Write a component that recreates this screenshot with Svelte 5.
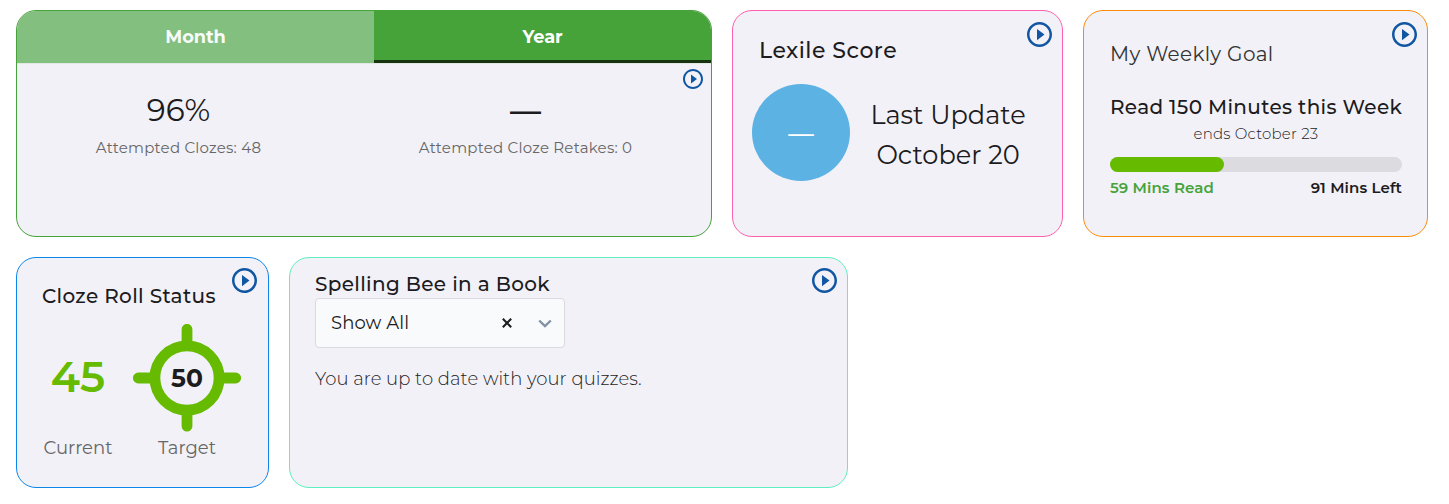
<script lang="ts">
	let activeTab = $state('Year');
	let selected = $state('Show All');

	const tabs = ['Month', 'Year'];
	const minutesRead = 59;
	const minutesGoal = 150;
	const progress = Math.floor((minutesRead / minutesGoal) * 100);
</script>

{#snippet play(small = false)}
	<button class="play" class:small aria-label="Play">
		<svg viewBox="2 2 20 20">
			<path
				d="M10 16.5l6-4.5-6-4.5v9zM12 2C6.48 2 2 6.48 2 12s4.48 10 10 10 10-4.48 10-10S17.52 2 12 2zm0 18c-4.41 0-8-3.59-8-8s3.59-8 8-8 8 3.59 8 8-3.59 8-8 8z"
			/>
		</svg>
	</button>
{/snippet}

<main class="dashboard">
	<div class="row">
		<section class="card clozes">
			<div class="tabs">
				{#each tabs as tab}
					<button class="tab" class:active={tab === activeTab} onclick={() => (activeTab = tab)}>
						{tab}
					</button>
				{/each}
			</div>
			<div class="stats">
				{@render play(true)}
				<div class="stat">
					<div class="value">96<span>%</span></div>
					<div class="label">Attempted Clozes: 48</div>
				</div>
				<div class="stat">
					<div class="value empty">—</div>
					<div class="label">Attempted Cloze Retakes: 0</div>
				</div>
			</div>
		</section>

		<section class="card lexile">
			{@render play()}
			<h2>Lexile Score</h2>
			<div class="lexile-body">
				<div class="score">—</div>
				<div class="update">
					<div>Last Update</div>
					<div>October 20</div>
				</div>
			</div>
		</section>

		<section class="card goal">
			{@render play()}
			<h2>My Weekly Goal</h2>
			<h3>Read {minutesGoal} Minutes this Week</h3>
			<div class="ends">ends October 23</div>
			<div class="bar"><div class="fill" style="width: {progress}%"></div></div>
			<div class="minutes">
				<span class="read">{minutesRead} Mins Read</span>
				<span class="left">{minutesGoal - minutesRead} Mins Left</span>
			</div>
		</section>
	</div>

	<div class="row second">
		<section class="card roll">
			{@render play()}
			<h2>Cloze Roll Status</h2>
			<div class="roll-grid">
				<div class="current">45</div>
				<div class="target">
					<svg viewBox="0 0 108 108">
						<circle cx="54" cy="54" r="32.1" />
						<path d="M54 5.3V19M54 89v13.2M5.3 54H19M89 54h13.7" />
					</svg>
					<span>50</span>
				</div>
				<div class="caption">Current</div>
				<div class="caption">Target</div>
			</div>
		</section>

		<section class="card spelling">
			{@render play()}
			<h2>Spelling Bee in a Book</h2>
			<div class="select">
				<span class="selected">{selected}</span>
				<svg class="clear" viewBox="0 0 10 10"><path d="M.8.8l8.4 8.4M9.2.8L.8 9.2" /></svg>
				<svg class="chevron" viewBox="0 0 14 9"><path d="M1.2 1.5L7 7l5.8-5.5" /></svg>
			</div>
			<p>You are up to date with your quizzes.</p>
		</section>
	</div>
</main>

<style>
	:global(body) {
		margin: 0;
		background: #fff;
	}

	.dashboard {
		display: flex;
		flex-direction: column;
		gap: 20px;
		padding: 10px 16px;
		font-family: Montserrat, Inter, sans-serif;
		color: #1c1b1d;
		white-space: nowrap;
	}

	.row {
		display: flex;
		gap: 20px;
		height: 227px;
	}
	.row.second {
		height: 231px;
	}

	.card {
		position: relative;
		box-sizing: border-box;
		border: 1px solid;
		border-radius: 20px;
		background: #f2f1f7;
	}

	button {
		border: none;
		padding: 0;
		font: inherit;
		background: none;
		cursor: pointer;
	}

	h2,
	h3,
	p {
		margin: 0;
		font-size: 20px;
		line-height: 30px;
		font-weight: 500;
		letter-spacing: 0.33px;
	}

	.play {
		position: absolute;
		top: 11px;
		right: 10px;
		width: 25px;
		height: 25px;
	}
	.play.small {
		top: 5px;
		right: 8px;
		width: 20px;
		height: 20px;
	}
	.second .play {
		top: 10px;
	}
	.roll .play {
		right: 11px;
	}
	.play svg {
		display: block;
		fill: #1156a3;
	}

	.clozes {
		width: 696px;
		border-color: #45a33a;
		overflow: hidden;
	}
	.tabs {
		display: flex;
		height: 52px;
		border-bottom: 1px solid #e2e8e4;
	}
	.tab {
		box-sizing: border-box;
		width: 357px;
		padding-bottom: 2px;
		background: #83bf7e;
		color: #f8fbf8;
		font-size: 17.8px;
		font-weight: 700;
		letter-spacing: -0.1px;
	}
	.tab.active {
		width: 337px;
		background: #45a33a;
		color: #fff;
		border-bottom: 3px solid #17330f;
		padding: 1px 0 0;
	}
	.stats {
		position: relative;
		display: flex;
		padding-top: 26px;
		text-align: center;
	}
	.stat {
		width: 323px;
	}
	.stat + .stat {
		width: 371px;
	}
	.value {
		font-size: 31px;
		line-height: 40px;
		font-weight: 450;
	}
	.value span {
		font-weight: 400;
	}
	.value.empty {
		font-weight: 600;
	}
	.label {
		margin-top: 8px;
		font-size: 15px;
		line-height: 20px;
		letter-spacing: 0.22px;
		color: #666;
	}

	.lexile {
		width: 331px;
		padding: 25px 19px 0;
		border-color: #ff5fae;
	}
	.lexile h2 {
		padding-left: 7px;
		font-size: 22px;
		letter-spacing: 0.5px;
	}
	.lexile-body {
		display: flex;
		gap: 20px;
		margin-top: 18px;
	}
	.score {
		width: 98px;
		height: 97px;
		border-radius: 50%;
		background: #5bb2e3;
		color: #fff;
		font-size: 25.6px;
		line-height: 97px;
		font-weight: 500;
		text-align: center;
	}
	.update {
		width: 156px;
		margin-top: 11px;
		font-size: 25.6px;
		line-height: 40px;
		text-align: center;
	}

	.goal {
		width: 345px;
		padding: 28px 25px 0 26px;
		border-color: #fb8c0a;
	}
	.goal h2 {
		font-weight: 400;
		color: #333;
	}
	.goal h3 {
		margin-top: 23px;
	}
	.ends {
		margin-top: 2px;
		font-size: 15px;
		line-height: 20px;
		letter-spacing: 0.2px;
		font-weight: 300;
		text-align: center;
	}
	.bar {
		height: 15px;
		margin-top: 13px;
		border-radius: 8px;
		background: #dcdbe0;
	}
	.fill {
		height: 100%;
		border-radius: 8px;
		background: #66bb00;
	}
	.minutes {
		display: flex;
		justify-content: space-between;
		margin-top: 6px;
		font-size: 15px;
		line-height: 20px;
		letter-spacing: 0.1px;
		font-weight: 600;
	}
	.read {
		color: #45a33a;
	}

	.roll {
		width: 253px;
		padding: 23px 0 0 25px;
		border-color: #0d86ea;
	}
	.roll-grid {
		display: grid;
		grid-template-columns: 72px 108px;
		column-gap: 19px;
		row-gap: 4px;
		margin-top: 13px;
		align-items: center;
		text-align: center;
	}
	.current {
		padding-bottom: 2px;
		font-size: 43px;
		line-height: 50px;
		font-weight: 600;
		color: #66bb00;
	}
	.target {
		display: grid;
		place-items: center;
		height: 108px;
	}
	.target > * {
		grid-area: 1 / 1;
	}
	.target svg {
		width: 108px;
		height: 108px;
		fill: none;
		stroke: #66bb00;
		stroke-width: 10.8;
		stroke-linecap: round;
	}
	.target span {
		font-size: 25px;
		font-weight: 700;
	}
	.caption {
		font-size: 18px;
		line-height: 24px;
		color: #666;
	}

	.spelling {
		width: 559px;
		padding: 13px 25px 0;
		border-color: #5eeebf;
	}
	.spelling h2 {
		line-height: 26px;
	}
	.select {
		display: flex;
		align-items: center;
		box-sizing: border-box;
		width: 250px;
		height: 50px;
		margin-top: 1px;
		padding: 0 12px 0 15px;
		border: 1px solid #d9d9df;
		border-radius: 4px;
		background: #f8fafc;
	}
	.selected {
		flex: 1;
		font-size: 18px;
		line-height: 24px;
		letter-spacing: 0.1px;
	}
	.clear {
		width: 10px;
		height: 10px;
		fill: none;
		stroke: #1c1b1d;
		stroke-width: 2;
	}
	.chevron {
		width: 14px;
		height: 9px;
		margin-left: 26px;
		fill: none;
		stroke: #8492a6;
		stroke-width: 2.4;
	}
	p {
		margin-top: 18px;
		font-size: 18px;
		line-height: 26px;
		font-weight: 300;
		letter-spacing: 0.05px;
	}
</style>
